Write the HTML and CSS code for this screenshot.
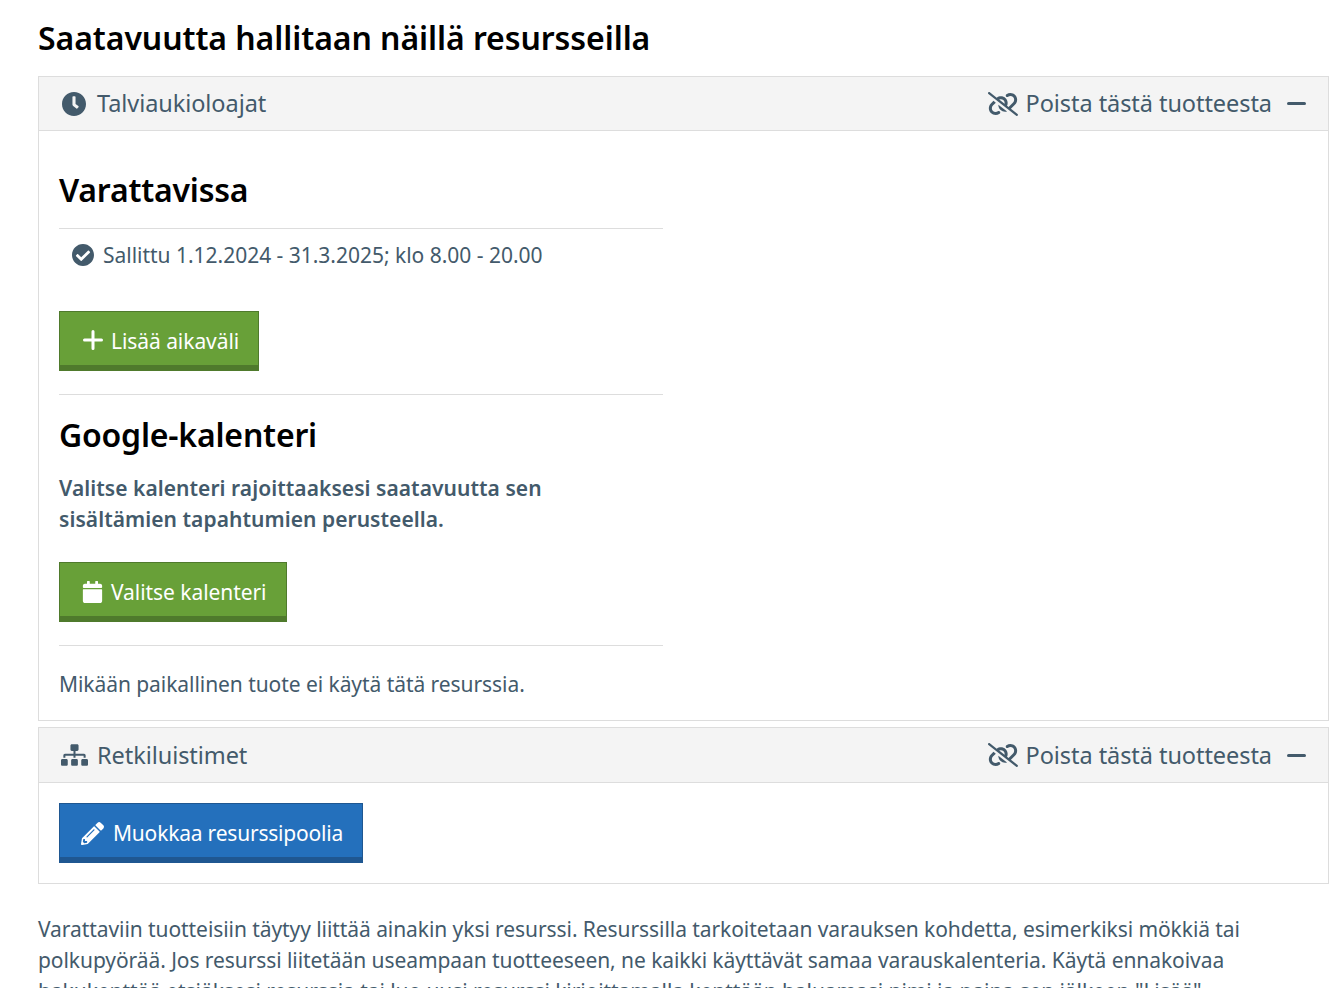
FILE: index.html
```html
<!DOCTYPE html>
<html lang="fi">
<head>
<meta charset="utf-8">
<title>Saatavuus</title>
<link rel="stylesheet" href="styles.css">
</head>
<body>
<main class="page">
  <h2 class="title">Saatavuutta hallitaan näillä resursseilla</h2>

  <section class="panel">
    <header class="panel-head short">
      <div class="head-left">
        <svg class="icon-clock" viewBox="8 8 496 496"><path fill="#435a6b" d="M256,8C119,8,8,119,8,256S119,504,256,504,504,393,504,256,393,8,256,8Zm92.490,313h0l-20,25a16,16,0,0,1-22.490,2.500h0l-67-49.720a40,40,0,0,1-15-31.230V112a16,16,0,0,1,16-16h32a16,16,0,0,1,16,16V256l58,42.500A16,16,0,0,1,348.490,321Z"/></svg>
        <span>Talviaukioloajat</span>
      </div>
      <div class="head-right">
        <svg class="icon-unlink" viewBox="0 0 640 512"><path fill="#435a6b" d="M38.800 5.100C28.400-3.100 13.300-1.200 5.100 9.200S-1.200 34.700 9.200 42.900l592 464c10.400 8.200 25.500 6.300 33.700-4.100s6.300-25.500-4.100-33.700L489.300 358.200l90.500-90.500c56.500-56.500 56.500-148 0-204.500c-50-50-128.800-56.500-186.300-15.400l-1.600 1.100c-14.400 10.300-17.700 30.300-7.400 44.600s30.300 17.700 44.600 7.400l1.600-1.100c32.100-22.900 76-19.300 103.800 8.600c31.500 31.500 31.500 82.500 0 114l-96 96-31.900-25C430.900 239.600 420.100 175.100 377 132c-52.200-52.300-134.500-56.200-191.300-11.700L38.800 5.100zM239 162c30.100-14.900 67.700-9.900 92.800 15.300c20 20 27.500 48.300 21.700 74.500L239 162zM116.600 187.900L60.200 244.300c-56.500 56.500-56.500 148 0 204.500c50 50 128.800 56.500 186.300 15.400l1.600-1.100c14.400-10.300 17.700-30.300 7.400-44.600s-30.300-17.700-44.600-7.400l-1.600 1.100c-32.100 22.900-76 19.300-103.800-8.600C74 372 74 321 105.500 289.500l61.800-61.800-50.600-39.900zM220.900 270c-2.100 39.800 12.200 80.100 42.200 110c38.900 38.900 94.400 51 143.600 36.300L220.900 270z"/></svg>
        <span>Poista tästä tuotteesta</span>
        <span class="minus"></span>
      </div>
    </header>
    <div class="panel-body">
      <div class="narrow">
        <h3 class="sub first">Varattavissa</h3>
        <div class="rule-row">
          <svg class="icon-check" viewBox="8 8 496 496"><path fill="#435a6b" d="M504 256c0 136.967-111.033 248-248 248S8 392.967 8 256 119.033 8 256 8s248 111.033 248 248zM227.314 387.314l184-184c6.248-6.248 6.248-16.379 0-22.627l-22.627-22.627c-6.248-6.249-16.379-6.249-22.628 0L216 308.118l-70.059-70.059c-6.248-6.248-16.379-6.248-22.628 0l-22.627 22.627c-6.248 6.248-6.248 16.379 0 22.627l104 104c6.249 6.250 16.379 6.250 22.628.001z"/></svg>
          <span>Sallittu 1.12.2024 - 31.3.2025; klo 8.00 - 20.00</span>
        </div>
        <a class="btn green add"><svg class="icon-plus" viewBox="0 0 20 20"><path d="M10 1.500v17M1.500 10h17" stroke="#fff" stroke-width="3" stroke-linecap="round"/></svg>Lisää aikaväli</a>
        <hr class="sep sep-a">
        <h3 class="sub google">Google-kalenteri</h3>
        <p class="strong-copy"><b>Valitse kalenteri rajoittaaksesi saatavuutta sen sisältämien tapahtumien perusteella.</b></p>
        <a class="btn green"><svg class="icon-cal" viewBox="0 0 448 512"><path fill="#fff" d="M12 192h424c6.600 0 12 5.400 12 12v260c0 26.500-21.500 48-48 48H48c-26.500 0-48-21.500-48-48V204c0-6.600 5.400-12 12-12zm436-44v-36c0-26.500-21.500-48-48-48h-48V12c0-6.600-5.400-12-12-12h-40c-6.600 0-12 5.400-12 12v52H160V12c0-6.600-5.400-12-12-12h-40c-6.600 0-12 5.400-12 12v52H48C21.500 64 0 85.500 0 112v36c0 6.600 5.400 12 12 12h424c6.600 0 12-5.400 12-12z"/></svg>Valitse kalenteri</a>
        <hr class="sep sep-a">
        <p class="note">Mikään paikallinen tuote ei käytä tätä resurssia.</p>
      </div>
    </div>
  </section>

  <section class="panel second">
    <header class="panel-head">
      <div class="head-left">
        <svg class="icon-tree" viewBox="0 0 640 512"><path fill="#435a6b" d="M128 352H32c-17.670 0-32 14.330-32 32v96c0 17.670 14.330 32 32 32h96c17.670 0 32-14.330 32-32v-96c0-17.670-14.330-32-32-32zm-24-80h192v48h48v-48h192v48h48v-57.590c0-21.170-17.230-38.410-38.410-38.410H344v-64h40c17.670 0 32-14.330 32-32V32c0-17.670-14.330-32-32-32H256c-17.670 0-32 14.330-32 32v96c0 17.670 14.330 32 32 32h40v64H94.410C73.230 224 56 241.230 56 262.410V320h48v-48zm264 80h-96c-17.670 0-32 14.330-32 32v96c0 17.670 14.330 32 32 32h96c17.670 0 32-14.330 32-32v-96c0-17.670-14.330-32-32-32zm240 0h-96c-17.670 0-32 14.330-32 32v96c0 17.670 14.330 32 32 32h96c17.670 0 32-14.330 32-32v-96c0-17.670-14.330-32-32-32z"/></svg>
        <span>Retkiluistimet</span>
      </div>
      <div class="head-right">
        <svg class="icon-unlink" viewBox="0 0 640 512"><path fill="#435a6b" d="M38.800 5.100C28.400-3.100 13.300-1.200 5.100 9.200S-1.200 34.700 9.200 42.900l592 464c10.400 8.200 25.500 6.300 33.700-4.100s6.300-25.500-4.100-33.700L489.300 358.200l90.500-90.500c56.500-56.500 56.500-148 0-204.500c-50-50-128.800-56.500-186.300-15.400l-1.600 1.100c-14.400 10.300-17.700 30.300-7.400 44.600s30.300 17.700 44.600 7.400l1.600-1.100c32.100-22.900 76-19.300 103.800 8.600c31.500 31.500 31.500 82.500 0 114l-96 96-31.900-25C430.900 239.600 420.100 175.100 377 132c-52.200-52.300-134.500-56.200-191.300-11.700L38.800 5.100zM239 162c30.100-14.900 67.700-9.900 92.800 15.300c20 20 27.500 48.300 21.700 74.500L239 162zM116.600 187.900L60.200 244.300c-56.500 56.500-56.500 148 0 204.500c50 50 128.800 56.500 186.300 15.400l1.600-1.100c14.400-10.300 17.700-30.300 7.400-44.600s-30.300-17.700-44.600-7.400l-1.600 1.100c-32.100 22.900-76 19.300-103.800-8.600C74 372 74 321 105.500 289.500l61.800-61.800-50.600-39.900zM220.900 270c-2.100 39.800 12.200 80.100 42.200 110c38.900 38.900 94.400 51 143.600 36.300L220.900 270z"/></svg>
        <span>Poista tästä tuotteesta</span>
        <span class="minus"></span>
      </div>
    </header>
    <div class="panel-body">
      <a class="btn blue"><svg class="icon-pen" viewBox="0 0 512 512"><path fill="#fff" d="M497.900 142.100l-46.100 46.100c-4.700 4.700-12.300 4.700-17 0l-111-111c-4.700-4.700-4.700-12.300 0-17l46.100-46.100c18.700-18.700 49.100-18.700 67.900 0l60.100 60.100c18.800 18.700 18.800 49.100 0 67.900zM284.200 99.800L21.600 362.400.4 483.900c-2.900 16.400 11.400 30.600 27.800 27.800l121.500-21.300 262.600-262.600c4.700-4.700 4.700-12.300 0-17l-111-111c-4.800-4.700-12.400-4.700-17.100 0zM124.100 339.900c-5.500-5.500-5.500-14.300 0-19.800l154-154c5.500-5.500 14.300-5.500 19.800 0s5.500 14.300 0 19.800l-154 154c-5.500 5.500-14.300 5.500-19.800 0zM88 424h48v36.300l-64.500 11.300-31.100-31.100L51.700 376H88v48z"/></svg>Muokkaa resurssipoolia</a>
    </div>
  </section>

  <p class="intro">Varattaviin tuotteisiin täytyy liittää ainakin yksi resurssi. Resurssilla tarkoitetaan varauksen kohdetta, esimerkiksi mökkiä tai polkupyörää. Jos resurssi liitetään useampaan tuotteeseen, ne kaikki käyttävät samaa varauskalenteria. Käytä ennakoivaa hakukenttää etsiäksesi resurssia tai luo uusi resurssi kirjoittamalla kenttään haluamasi nimi ja paina sen jälkeen "Lisää"</p>
</main>
</body>
</html>
```
FILE: styles.css
```css
html, body { margin: 0; padding: 0; height: 988px; overflow: hidden; background: #fff; }
body { font-family: "Noto Sans", sans-serif; font-size: 21px; letter-spacing: -0.06px; line-height: 31px; color: #435a6b; }
.page { padding: 0 7px 0 38px; }
.title { margin: 0; padding-top: 15px; height: 76px; box-sizing: border-box; font-size: 32px; line-height: 46px; font-weight: 600; letter-spacing: -0.07px; color: #000; }
.panel { border: 1px solid #ddd; }
.second { margin-top: 6px; }
.panel-head { display: flex; justify-content: space-between; align-items: center; height: 54px; background: #f4f4f4; border-bottom: 1px solid #ddd; padding: 0 22px 0 23px; font-size: 23.500px; }
.panel-head.short { height: 53px; }
.head-left, .head-right { display: flex; align-items: center; }
.icon-clock { width: 24px; height: 24px; margin-right: 11px; flex: none; }
.icon-tree { width: 27px; height: 22px; margin-left: -1px; margin-right: 9px; flex: none; }
.icon-unlink { width: 30px; height: 24px; margin-right: 8px; flex: none; }
.minus { width: 19px; height: 3px; border-radius: 2px; background: #435a6b; margin-left: 15px; }
.panel-body { padding: 20px; }
.narrow { width: 604px; }
.sub { margin: 0; font-size: 32px; line-height: 46px; font-weight: 600; letter-spacing: -0.2px; color: #000; }
.sub.first { padding: 16px 0 15px; border-bottom: 1px solid #ddd; }
.sub.google { margin-top: 17px; }
.rule-row { display: flex; align-items: center; padding: 11px 0 0 13px; height: 31px; letter-spacing: -0.02px; }
.icon-check { width: 22px; height: 22px; margin: 0 9px 2px 0; flex: none; }
.btn { display: inline-flex; align-items: center; height: 60px; box-sizing: border-box; padding: 5px 20px 0; color: #fff; border: 1px solid; border-bottom-width: 6px; vertical-align: top; }
.green { background: #68a038; border-color: #4f7a2c; }
.blue { background: #2470bc; border-color: #1f5791; letter-spacing: -0.2px; padding-right: 19px; }
.add { margin-top: 40px; padding-right: 19px; }
.icon-plus { width: 20px; height: 20px; margin: 0 8px 3px 3px; flex: none; }
.icon-cal { width: 21px; height: 22px; margin: 0 8px 0 2px; flex: none; }
.icon-pen { width: 23px; height: 23px; margin: 0 9px 0 1px; flex: none; }
.sep { border: 0; border-top: 1px solid #ddd; margin: 0; }
.sep-a { margin-top: 23px; }
.strong-copy { margin: 15px 0 27px; max-width: 540px; letter-spacing: 0.05px; }
.strong-copy b { font-weight: 600; }
.note { margin: 23px 0 0; }
.intro { margin: 30px 0 0; letter-spacing: -0.07px; }
```
